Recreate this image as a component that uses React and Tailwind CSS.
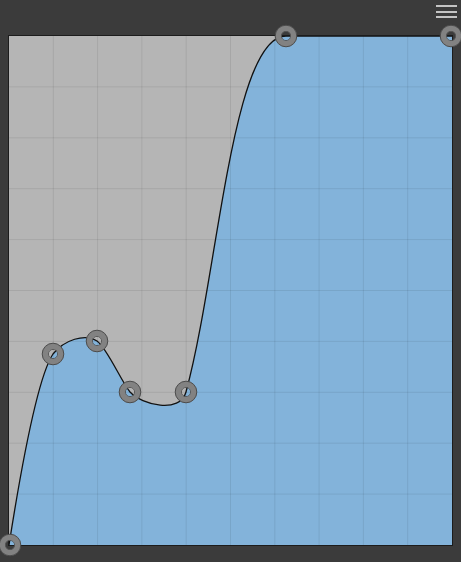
import React from "react";

// Curve editor: control points and the spline segments between them (page coords)
const points = [
  [10, 545],
  [53, 354],
  [97, 341],
  [130, 392],
  [186, 392],
  [286, 36],
  [451, 36],
];

const curve =
  "M 9 545 C 20 475 37 378 53 354 " +
  "C 64 340 85 333 97 341 " +
  "C 107 348 121 381 130 392 " +
  "C 142 405 180 414 186 392 " +
  "C 218 275 232 36 286 36 " +
  "L 452 36";

const fill = curve + " L 452 545 L 9 545 Z";

const cols = [1, 2, 3, 4, 5, 6, 7, 8, 9].map((i) => 9 + (443 * i) / 10);
const rows = [1, 2, 3, 4, 5, 6, 7, 8, 9].map((i) => 36 + (509 * i) / 10);

function Handle({ x, y }) {
  return (
    <g>
      <circle cx={x} cy={y} r="7.8" fill="none" stroke="#828282" strokeWidth="6" />
      <circle cx={x} cy={y} r="10.8" fill="none" stroke="#4c4c4c" strokeWidth="1" />
      <circle cx={x} cy={y} r="4.6" fill="none" stroke="#555" strokeWidth="0.9" />
    </g>
  );
}

export default function App() {
  return (
    <div className="w-[461px] h-[562px] bg-[#3b3b3b] flex flex-col overflow-hidden">
      {/* Toolbar */}
      <div className="h-[35px] flex justify-end items-start pt-[5px] pr-[4px]">
        <button className="flex flex-col gap-[3.5px] w-[21px]">
          <span className="block h-[2px] w-full bg-[#c4c4c4]" />
          <span className="block h-[2px] w-full bg-[#c4c4c4]" />
          <span className="block h-[2px] w-full bg-[#c4c4c4]" />
        </button>
      </div>

      {/* Graph */}
      <div className="ml-[8px] w-[445px] h-[511px] border border-[#1c1c1c] bg-[#b5b5b5]">
        <svg
          viewBox="9 36 443 509"
          className="block w-full h-full overflow-visible"
        >
          <defs>
            <clipPath id="area">
              <rect x="9" y="36" width="443" height="509" />
            </clipPath>
          </defs>
          <g clipPath="url(#area)">
            <path d={fill} fill="#83b3da" />
            {cols.map((x) => (
              <line key={"c" + x} x1={x} x2={x} y1="36" y2="545" stroke="#000" strokeOpacity="0.08" strokeWidth="1" />
            ))}
            {rows.map((y) => (
              <line key={"r" + y} x1="9" x2="452" y1={y} y2={y} stroke="#000" strokeOpacity="0.08" strokeWidth="1" />
            ))}
            <path d={curve} fill="none" stroke="#111" strokeWidth="1.3" />
          </g>
          {points.map(([x, y]) => (
            <Handle key={x} x={x} y={y} />
          ))}
        </svg>
      </div>
    </div>
  );
}
